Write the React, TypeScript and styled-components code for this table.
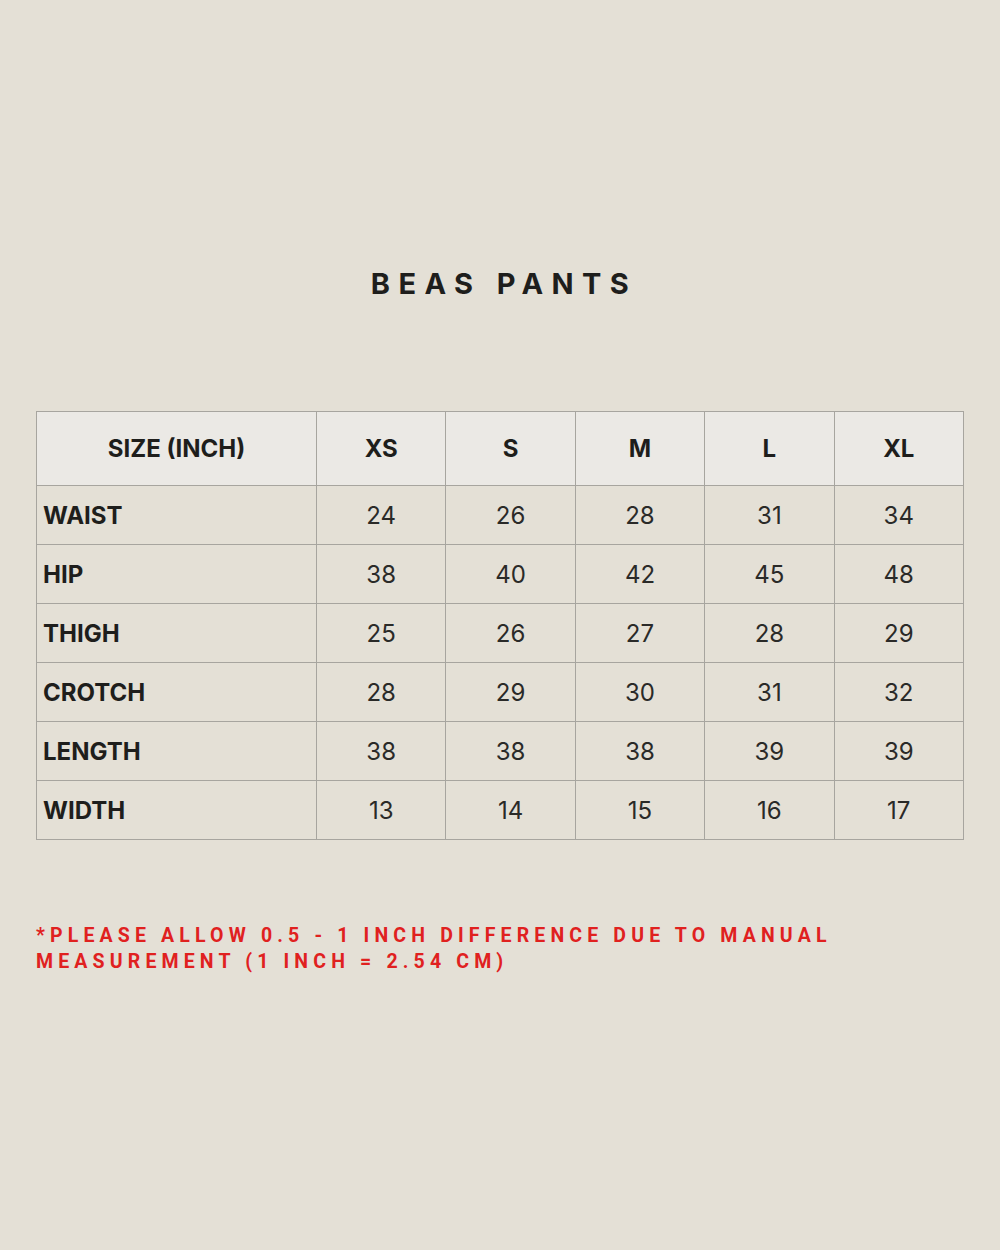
import React from 'react';
import styled, { createGlobalStyle } from 'styled-components';

const GlobalStyle = createGlobalStyle`
  html, body {
    margin: 0;
    padding: 0;
    background: #e4e0d6;
  }
`;

const Page = styled.div`
  width: 1000px;
  height: 1250px;
  box-sizing: border-box;
  padding: 266px 36px 0 36px;
  background: #e4e0d6;
  font-family: Inter, "Noto Sans", sans-serif;
  color: #1e1e1c;
`;

const Title = styled.h1`
  margin: 0 0 109px 0;
  text-align: center;
  font-size: 29px;
  line-height: 36px;
  font-weight: 700;
  letter-spacing: 8.4px;
  padding-left: 8px;
`;

const Table = styled.table`
  width: 928px;
  border-collapse: collapse;
  table-layout: fixed;
`;

const HeadCell = styled.th<{ first?: boolean }>`
  height: 73px;
  padding: 0;
  border: 1.5px solid #a7a59f;
  background: #ebe9e5;
  font-size: 24px;
  font-weight: 700;
  text-align: center;
  width: ${p => (p.first ? '279px' : 'auto')};
`;

const LabelCell = styled.td`
  height: 58px;
  padding: 0 0 0 6px;
  border: 1.5px solid #a7a59f;
  font-size: 24px;
  font-weight: 700;
  text-align: left;
`;

const ValueCell = styled.td`
  height: 58px;
  padding: 0;
  border: 1.5px solid #a7a59f;
  font-size: 24px;
  font-weight: 400;
  text-align: center;
  color: #2a2a28;
`;

const Note = styled.p`
  margin: 83px 0 0 0;
  width: 880px;
  font-family: Roboto, "Liberation Sans", sans-serif;
  font-size: 19.5px;
  line-height: 26px;
  font-weight: 700;
  letter-spacing: 5.15px;
  color: #e0211f;
`;

const sizes = ['XS', 'S', 'M', 'L', 'XL'];

const rows: [string, number[]][] = [
  ['WAIST', [24, 26, 28, 31, 34]],
  ['HIP', [38, 40, 42, 45, 48]],
  ['THIGH', [25, 26, 27, 28, 29]],
  ['CROTCH', [28, 29, 30, 31, 32]],
  ['LENGTH', [38, 38, 38, 39, 39]],
  ['WIDTH', [13, 14, 15, 16, 17]],
];

export default function App() {
  return (
    <>
      <GlobalStyle />
      <Page>
        <Title>BEAS PANTS</Title>
        <Table>
          <thead>
            <tr>
              <HeadCell first>SIZE (INCH)</HeadCell>
              {sizes.map(s => (
                <HeadCell key={s}>{s}</HeadCell>
              ))}
            </tr>
          </thead>
          <tbody>
            {rows.map(([label, values]) => (
              <tr key={label}>
                <LabelCell>{label}</LabelCell>
                {values.map((v, i) => (
                  <ValueCell key={i}>{v}</ValueCell>
                ))}
              </tr>
            ))}
          </tbody>
        </Table>
        <Note>
          *PLEASE ALLOW 0.5 - 1 INCH DIFFERENCE DUE TO MANUAL<br />
          MEASUREMENT (1 INCH = 2.54 CM)
        </Note>
      </Page>
    </>
  );
}
